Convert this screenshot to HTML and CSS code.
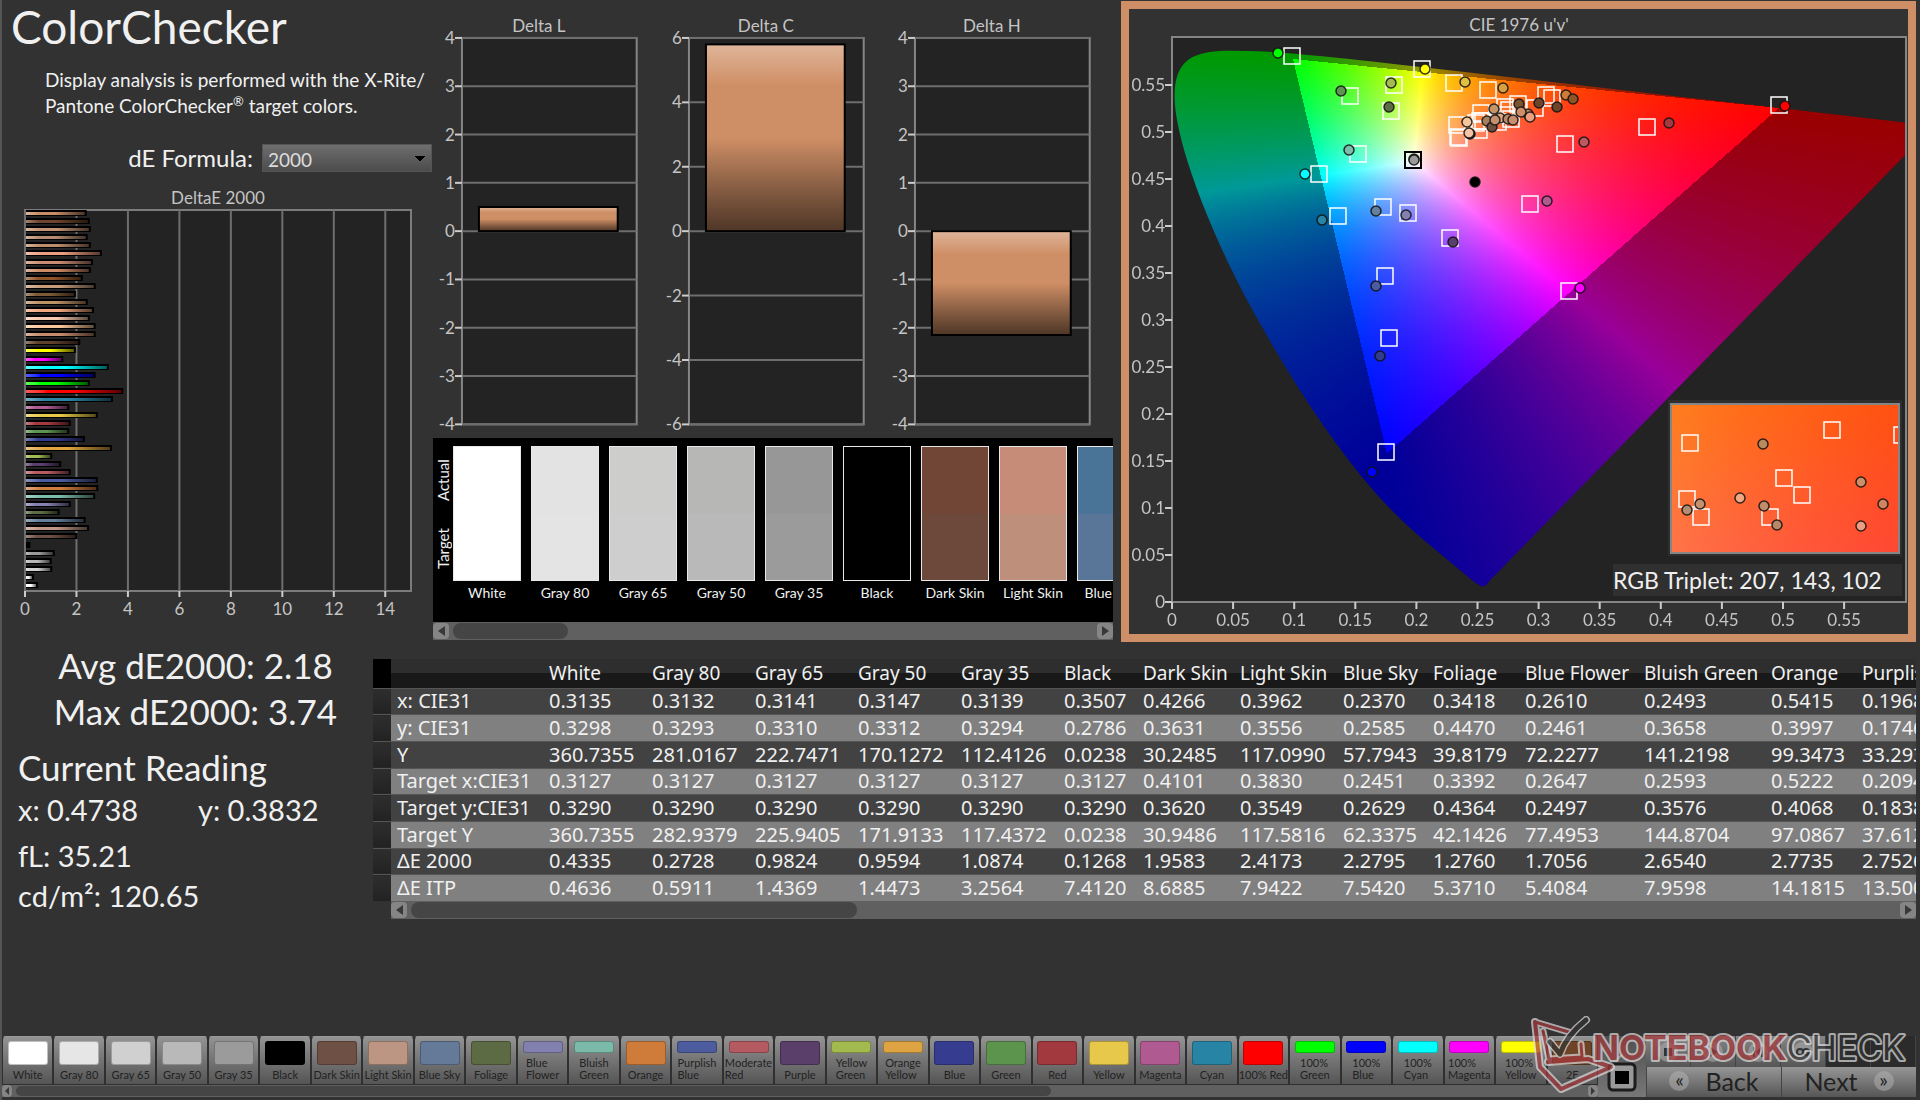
FILE: index.html
```html
<!DOCTYPE html>
<html lang="en">
<head>
    <meta charset="UTF-8">
    <meta name="viewport" content="width=device-width, initial-scale=1.0">
    <title>ColorChecker</title>
    <link rel="stylesheet" href="styles.css">
</head>
<body>
    <main>
        <section class="top">
            <div class="summary">
                <h1>ColorChecker</h1>
                <p class="intro">Display analysis is performed with the X-Rite/<br>Pantone ColorChecker<sup>®</sup> target colors.</p>
                <div class="formula">
                    <label for="formula">dE Formula:</label>
                    <select id="formula">
                        <option>2000</option>
                        <option>1994</option>
                        <option>ITP</option>
                    </select>
                </div>
                <svg id="de-chart" class="chart" viewBox="0 0 431 445"></svg>
            </div>

            <div class="deltas">
                <div class="delta-row">
                    <svg id="delta-l" class="chart" viewBox="0 0 227 438"></svg>
                    <svg id="delta-c" class="chart" viewBox="0 0 227 438"></svg>
                    <svg id="delta-h" class="chart" viewBox="0 0 227 438"></svg>
                </div>
                <div class="compare">
                    <div class="compare-view">
                        <div class="side"><span>Actual</span><span>Target</span></div>
                        <div class="patches" id="patches"></div>
                    </div>
                    <div class="scroll">
                        <button class="arrow left" aria-label="Scroll left"></button>
                        <div class="track"><div class="thumb thumb-patches"></div></div>
                        <button class="arrow right" aria-label="Scroll right"></button>
                    </div>
                </div>
            </div>

            <div class="cie">
                <svg id="cie-chart" class="chart" viewBox="0 0 779 625">
                    <foreignObject x="43" y="28" width="734" height="565">
                        <canvas id="gamut" width="734" height="565"></canvas>
                    </foreignObject>
                    <g id="cie-points"></g>
                </svg>
            </div>
        </section>

        <section class="middle">
            <div class="readings">
                <div class="average">
                    <p>Avg dE2000: 2.18</p>
                    <p>Max dE2000: 3.74</p>
                </div>
                <h2>Current Reading</h2>
                <div class="xy"><span>x: 0.4738</span><span>y: 0.3832</span></div>
                <p class="lum">fL: 35.21</p>
                <p class="lum">cd/m²: 120.65</p>
            </div>
            <div class="data">
                <div class="table-view">
                    <table id="data-table"></table>
                </div>
                <div class="scroll scroll-table">
                    <button class="arrow left" aria-label="Scroll left"></button>
                    <div class="track"><div class="thumb thumb-table"></div></div>
                    <button class="arrow right" aria-label="Scroll right"></button>
                </div>
            </div>
        </section>
    </main>

    <footer>
        <div class="strip">
            <div class="tiles" id="tiles"></div>
            <div class="scroll scroll-small">
                <button class="arrow left" aria-label="Scroll left"></button>
                <div class="track"><div class="thumb thumb-tiles"></div></div>
                <button class="arrow right" aria-label="Scroll right"></button>
            </div>
        </div>
        <button class="stop" aria-label="Stop">
            <svg viewBox="0 0 30 38"><path d="M9 6l6-5 6 5" fill="none" stroke="#999" stroke-width="2"/><rect x="2" y="10" width="26" height="26" rx="4" fill="#999" stroke="#1c1c1c" stroke-width="3"/><rect x="8" y="17" width="14" height="13" fill="#000"/></svg>
        </button>
        <div class="controls">
            <div class="transport">
                <button aria-label="Stop reading"><svg viewBox="0 0 20 20"><rect x="6" y="6" width="8" height="8"/></svg></button>
                <button aria-label="Play"><svg viewBox="0 0 20 20"><path d="M7 5l8 5-8 5z"/></svg></button>
                <button aria-label="Single step"><svg viewBox="0 0 20 20"><path d="M5 5h2v10H5zM13 5h2v10h-2zM8 10l4-4v8z"/></svg></button>
                <button aria-label="Continuous"><svg viewBox="0 0 20 20"><path d="M4 10a3 3 0 0 1 6 0 3 3 0 0 0 6 0 3 3 0 0 0-6 0 3 3 0 0 1-6 0z" fill="none" stroke="#333" stroke-width="2"/></svg></button>
                <button class="off" aria-label="Previous" disabled></button>
                <button class="off" aria-label="Following" disabled></button>
            </div>
            <div class="nav">
                <button><i>«</i>Back</button>
                <button>Next<i>»</i></button>
            </div>
        </div>
        <svg class="watermark" viewBox="0 0 390 80">
            <g fill="none" stroke-linejoin="round" stroke-linecap="round">
                <path d="M9 8 L14 53 L35 75 L85 53 L62 45 L22 48" stroke="#ddd" stroke-width="8"/>
                <path d="M9 8 L46 19 M17 17 L23 45 L56 43 L55 30" stroke="#ddd" stroke-width="7"/>
                <path d="M9 8 L14 53 L35 75 L85 53 L62 45 L22 48" stroke="#a8383c" stroke-width="4"/>
                <path d="M9 8 L46 19 M17 17 L23 45 L56 43 L55 30" stroke="#a8383c" stroke-width="3"/>
                <path d="M24 28 L34 40 Q40 22 60 6" stroke="#ddd" stroke-width="8"/>
                <path d="M24 28 L34 40 Q40 22 60 6" stroke="#333" stroke-width="5"/>
            </g>
            <text x="67" y="46"><tspan class="wm-red">NOTEBOOK</tspan><tspan class="wm-dark">CHECK</tspan></text>
        </svg>
    </footer>

    <script src="script.js"></script>
</body>
</html>
```
FILE: styles.css
```css
:root {
    --bg: #323232;
    --text: #f0f0f0;
    --muted: #c4c4c4;
    --accent: #cf8f66;
}

* {
    margin: 0;
    padding: 0;
    box-sizing: border-box;
}

body {
    background: var(--bg);
    color: var(--text);
    font-family: Lato, 'Open Sans', sans-serif;
    min-height: 100vh;
    display: flex;
    flex-direction: column;
    overflow-x: hidden;
    border-left: 2px solid #555;
}

button {
    font-family: inherit;
    border: none;
    cursor: pointer;
}

.chart {
    display: block;
    width: 100%;
    font-size: 17px;
}

.chart text {
    fill: var(--muted);
}

/* Top row */
.top {
    display: grid;
    grid-template-columns: minmax(0, 431fr) minmax(0, 688fr) minmax(0, 799fr);
    align-items: start;
}

h1 {
    font-size: 46px;
    font-weight: 400;
    line-height: 54px;
    padding-left: 9px;
}

.intro {
    font-size: 19px;
    line-height: 26px;
    padding: 13px 0 0 43px;
    white-space: nowrap;
}

.intro sup {
    font-size: 13px;
    line-height: 0;
}

.formula {
    display: flex;
    justify-content: flex-end;
    align-items: center;
    gap: 9px;
    margin: 25px 1px 13px 0;
    font-size: 24px;
    line-height: 28px;
}

.formula select {
    appearance: none;
    width: 170px;
    height: 28px;
    padding: 3px 5px 0;
    border: 1px solid #555;
    color: #ddd;
    font-family: inherit;
    font-size: 19px;
    background:
        linear-gradient(to bottom left, #000 50%, transparent 50%) calc(100% - 11px) 11px / 5px 6px no-repeat,
        linear-gradient(to bottom right, #000 50%, transparent 50%) calc(100% - 6px) 11px / 5px 6px no-repeat,
        linear-gradient(#6e6e6e, #4c4c4c);
}

.delta-row {
    display: grid;
    grid-template-columns: repeat(3, 1fr);
    margin-right: 8px;
    padding-top: 1px;
}

/* Actual / target patches */
.compare {
    margin-right: 8px;
    background: #000;
}

.compare-view {
    display: flex;
    height: 184px;
    padding-top: 8px;
    overflow: hidden;
}

.side {
    flex: none;
    width: 20px;
    height: 136px;
    display: flex;
    flex-direction: row-reverse;
    justify-content: space-around;
    writing-mode: vertical-rl;
    transform: rotate(180deg);
    font-size: 15px;
    line-height: 20px;
}

.patches {
    display: flex;
    gap: 10px;
    overflow: hidden;
}

.patch {
    flex: none;
    width: 68px;
    font-size: 14px;
    line-height: 24px;
    text-align: center;
    white-space: nowrap;
}

.patch-color {
    height: 135px;
    border: 1px solid #e8e8e8;
    display: flex;
    flex-direction: column;
}

.patch-color div {
    flex: 1;
}

/* Scroll bars */
.scroll {
    display: flex;
    align-items: center;
    height: 18px;
    background: #606060;
}

.arrow {
    flex: none;
    width: 16px;
    height: 16px;
    border-radius: 4px;
    background: #858585;
    display: flex;
    align-items: center;
    justify-content: center;
}

.arrow::before {
    content: '';
    border: 5px solid transparent;
}

.arrow.left::before {
    border-right: 7px solid #383838;
    border-left: 0;
}

.arrow.right::before {
    border-left: 7px solid #383838;
    border-right: 0;
}

.track {
    flex: 1;
    margin: 0 4px;
}

.thumb {
    height: 16px;
    border-radius: 8px;
    background: #454545;
}

.thumb-patches {
    width: 18%;
}

.thumb-table {
    width: 30%;
}

.thumb-tiles {
    width: 66%;
}

/* CIE panel */
.cie {
    margin: 1px 4px 0 0;
    border: 8px solid var(--accent);
}

.cie canvas {
    display: block;
}

.cie .triplet {
    font-size: 23px;
    fill: var(--text);
}

/* Readings and table */
.middle {
    display: flex;
}

.readings {
    flex: none;
    width: 371px;
    padding-left: 16px;
    font-size: 29px;
    line-height: 40px;
}

.average {
    font-size: 35px;
    line-height: 46px;
    text-align: center;
    padding-bottom: 10px;
}

.readings h2 {
    font-size: 35px;
    font-weight: 400;
    line-height: 46px;
}

.xy {
    display: grid;
    grid-template-columns: 180px 1fr;
    margin-bottom: 6px;
}

.data {
    flex: 1;
    min-width: 0;
    padding: 17px 4px 0 0;
}

.table-view {
    overflow: hidden;
}

table {
    table-layout: fixed;
    width: 1620px;
    height: 242px;
    border-collapse: collapse;
    font-family: 'Noto Sans', 'Open Sans', sans-serif;
    font-size: 20px;
    line-height: 24px;
}

th,
td {
    font-weight: 400;
    text-align: left;
    padding-left: 6px;
    white-space: nowrap;
}

thead th {
    height: 29px;
    font-size: 19px;
    background: linear-gradient(#2e2e2e 50%, #191919 50%);
}

thead th.gutter {
    background: #000;
}

tbody tr {
    background: #424242;
    border-top: 1px solid #555;
}

tbody tr:nth-child(even) {
    background: #808080;
}

tbody td.gutter {
    background: linear-gradient(#2e2e2e, #222);
}

.scroll-table {
    margin-left: 18px;
}

/* Bottom bar */
footer {
    position: relative;
    display: flex;
    align-items: flex-end;
    margin-top: auto;
    padding: 0 4px 3px 0;
}

.strip {
    flex: 1;
    min-width: 0;
}

.tiles {
    display: grid;
    grid-template-columns: repeat(31, 1fr);
}

.tile {
    height: 49px;
    border: 1px solid #303030;
    border-top-color: #999;
    border-radius: 4px 4px 0 0;
    background: linear-gradient(#939393, #555);
    color: #222;
    font-size: 11px;
    line-height: 12px;
    display: flex;
    flex-direction: column;
    align-items: center;
    justify-content: space-between;
    padding: 4px 0 3px;
    min-width: 0;
    overflow: hidden;
}

.tile .chip {
    width: 40px;
    flex: 1;
    margin-bottom: 4px;
    border: 1px solid rgba(0, 0, 0, 0.25);
    border-radius: 3px;
}

.tile .name {
    white-space: pre;
    text-align: left;
}

.scroll-small {
    height: 12px;
}

.scroll-small .arrow {
    width: 10px;
    height: 12px;
}

.scroll-small .arrow::before {
    border-width: 4px;
}

.scroll-small .thumb {
    height: 10px;
}

.stop {
    width: 48px;
    height: 61px;
    padding: 12px 9px 0;
    background: linear-gradient(#505050, #777);
}

.stop svg {
    display: block;
    width: 30px;
}

.controls {
    width: 270px;
}

.transport {
    display: grid;
    grid-template-columns: repeat(6, 1fr);
}

.transport button {
    display: flex;
    align-items: center;
    justify-content: center;
    height: 31px;
    background: linear-gradient(#858585, #565656);
    border-right: 1px solid #444;
}

.transport svg {
    width: 20px;
    border-radius: 50%;
    background: rgba(180, 180, 180, 0.5);
    fill: #333;
}

.transport .off {
    background: #2b2b2b;
}

.nav {
    display: grid;
    grid-template-columns: 1fr 1fr;
}

.nav button {
    height: 30px;
    display: flex;
    align-items: center;
    justify-content: center;
    gap: 16px;
    padding-bottom: 3px;
    font-size: 25px;
    color: #222;
    background: linear-gradient(#969696, #565656);
    border-left: 1px solid #444;
}

.nav i {
    width: 20px;
    height: 20px;
    border-radius: 50%;
    background: rgba(180, 180, 180, 0.5);
    font-style: normal;
    font-size: 20px;
    line-height: 17px;
}

.watermark {
    position: absolute;
    right: 4px;
    bottom: 6px;
    width: 390px;
    opacity: 0.7;
    pointer-events: none;
}

.watermark text {
    font-family: Inter, sans-serif;
    font-size: 34px;
    paint-order: stroke;
    stroke: #ddd;
    stroke-width: 4px;
    stroke-linejoin: round;
}

.wm-red {
    fill: #a8383c;
    font-weight: 700;
}

.wm-dark {
    fill: #333;
}
```
FILE: script.js
```js
const SVG = 'http://www.w3.org/2000/svg';

function add(parent, tag, attrs, text) {
    const el = document.createElementNS(SVG, tag);
    for (const key in attrs) el.setAttribute(key, attrs[key]);
    if (text !== undefined) el.textContent = text;
    parent.appendChild(el);
    return el;
}

function barGradient(svg, id, color, vertical) {
    const g = add(svg, 'linearGradient', { id: id, x1: 0, y1: 0, x2: vertical ? 0 : 1, y2: vertical ? 1 : 0 });
    add(g, 'stop', { offset: 0, 'stop-color': `color-mix(in srgb, ${color} 66%, white)` });
    add(g, 'stop', { offset: 0.22, 'stop-color': color });
    add(g, 'stop', { offset: 0.5, 'stop-color': color });
    add(g, 'stop', { offset: 1, 'stop-color': `color-mix(in srgb, ${color} 38%, black)` });
}

/* DeltaE 2000 bars */
const deBars = [
    [2.32, '#c68e66'], [2.44, '#6b4429'], [2.48, '#c49274'], [2.36, '#b58c70'], [2.48, '#bd8d6c'],
    [2.91, '#ee9e80'], [2.56, '#c98c72'], [2.48, '#cd8b66'], [2.17, '#8f5428'], [2.67, '#c79c7a'],
    [1.9, '#7d5a34'], [2.36, '#bd9264'], [2.6, '#f0a880'], [2.44, '#f6caae'], [2.67, '#fcc89c'],
    [2.67, '#c48c6c'], [2.07, '#60402a'], [1.9, '#ffff00'], [1.41, '#ff00ff'], [3.18, '#00ffff'],
    [2.67, '#0000ff'], [2.44, '#00ff00'], [3.74, '#ff0000'], [3.34, '#2a84a4'], [1.64, '#b05a92'],
    [2.75, '#e8c848'], [1.7, '#a43a40'], [1.64, '#5c9450'], [2.25, '#343c90'], [3.3, '#dea440'],
    [0.98, '#a2bc50'], [1.33, '#5a3e6c'], [1.7, '#b85a60'], [2.75, '#4c5ca0'], [2.77, '#d07c3c'],
    [2.65, '#7cbcaa'], [1.7, '#8480b0'], [1.27, '#5c6c44'], [2.28, '#64809c'], [2.41, '#c09684'],
    [1.96, '#6e5044'], [0.13, '#000000'], [1.08, '#999999'], [0.96, '#b8b8b8'], [0.98, '#d0d0d0'],
    [0.27, '#eeeeee'], [0.43, '#ffffff']
];

function drawDeChart() {
    const svg = document.getElementById('de-chart');
    const left = 23, top = 25, width = 386, height = 381, unit = width / 15;
    add(svg, 'text', { x: 216, y: 19, 'text-anchor': 'middle' }, 'DeltaE 2000');
    add(svg, 'rect', { x: left, y: top, width: width, height: height, fill: '#232323', stroke: '#7c7c7c', 'stroke-width': 2 });
    for (let v = 0; v <= 14; v += 2) {
        const x = left + v * unit;
        add(svg, 'path', { d: `M${x} ${top}v${height}`, stroke: '#6e6e6e', 'stroke-width': 2 });
        add(svg, 'path', { d: `M${x} ${top + height}v6`, stroke: '#ccc', 'stroke-width': 2 });
        add(svg, 'text', { x: x, y: top + height + 24, 'text-anchor': 'middle' }, v);
    }
    deBars.forEach((bar, i) => {
        barGradient(svg, 'de' + i, bar[1], false);
        const y = Math.round(top + i * (height - 9) / 46);
        add(svg, 'rect', { x: left + 1, y: y, width: bar[0] * unit + 1, height: 6, fill: '#000' });
        add(svg, 'rect', { x: left + 1, y: y + 2, width: Math.max(0, bar[0] * unit - 1), height: 3, fill: `url(#de${i})` });
    });
}

/* Delta L / C / H */
function drawDelta(id, title, max, step, value) {
    const svg = document.getElementById(id);
    const left = 29, top = 37, width = 175, height = 387;
    const toY = v => top + (max - v) * height / (2 * max);
    barGradient(svg, id + '-fill', '#cf8f66', true);
    add(svg, 'text', { x: 106, y: 31, 'text-anchor': 'middle' }, title);
    add(svg, 'rect', { x: left, y: top, width: width, height: height, fill: '#232323', stroke: '#858585', 'stroke-width': 2 });
    for (let v = -max; v <= max; v += step) {
        add(svg, 'path', { d: `M${left} ${toY(v)}h${width}`, stroke: '#6e6e6e', 'stroke-width': 2 });
        add(svg, 'path', { d: `M${left - 7} ${toY(v)}h7`, stroke: '#ccc', 'stroke-width': 2 });
        add(svg, 'text', { x: left - 7, y: toY(v) + 6, 'text-anchor': 'end' }, v);
    }
    const y = Math.min(toY(0), toY(value));
    add(svg, 'rect', { x: 46, y: y, width: 139, height: Math.abs(toY(0) - toY(value)), fill: `url(#${id}-fill)`, stroke: '#000', 'stroke-width': 2 });
}

/* Actual / target patches: name, actual, target */
const patches = [
    ['White', '#ffffff', '#ffffff'], ['Gray 80', '#e3e3e3', '#e4e4e4'], ['Gray 65', '#cdcdcb', '#cecece'],
    ['Gray 50', '#b7b7b5', '#b9b9b9'], ['Gray 35', '#979797', '#9b9b9b'], ['Black', '#000000', '#000000'],
    ['Dark Skin', '#714636', '#6c493b'], ['Light Skin', '#c68c78', '#be907c'], ['Blue Sky', '#4a7398', '#597699']
];

function drawPatches() {
    document.getElementById('patches').innerHTML = patches.map(p =>
        `<div class="patch"><div class="patch-color"><div style="background:${p[1]}"></div><div style="background:${p[2]}"></div></div>${p[0]}</div>`
    ).join('');
}

/* CIE 1976 chart */
const locus = [
    [.1741, .0050], [.1714, .0051], [.1689, .0069], [.1644, .0109], [.1566, .0177], [.1510, .0227], [.1440, .0297],
    [.1355, .0399], [.1241, .0578], [.1096, .0868], [.0913, .1327], [.0687, .2007], [.0454, .2950], [.0235, .4127],
    [.0082, .5384], [.0039, .6548], [.0139, .7502], [.0389, .8120], [.0743, .8338], [.1142, .8262], [.1547, .8059],
    [.2296, .7543], [.3016, .6923], [.3731, .6245], [.4441, .5547], [.5125, .4866], [.5752, .4242], [.6270, .3725],
    [.6658, .3340], [.6915, .3083], [.7190, .2809], [.7347, .2653]
];
const U_PX = 1222, V_PX = 940, PLOT_W = 734, PLOT_H = 565;

function gamutColor(u, v) {
    const X = 9 * u / (4 * v), Y = 1, Z = (12 - 3 * u - 20 * v) / (4 * v);
    const rgb = [
        2.4935 * X - 0.9314 * Y - 0.4027 * Z,
        -0.8295 * X + 1.7627 * Y + 0.0236 * Z,
        0.0358 * X - 0.0762 * Y + 0.9569 * Z
    ];
    const max = Math.max(...rgb);
    const inside = Math.min(...rgb) >= 0;
    return rgb.map(c => Math.max(c, 0) / max * 255 * (inside ? 1 : 0.6));
}

function paint(canvas, u0, u1, v0, v1) {
    const ctx = canvas.getContext('2d');
    const w = canvas.width, h = canvas.height;
    const img = ctx.createImageData(w, h);
    for (let y = 0; y < h; y++) {
        for (let x = 0; x < w; x++) {
            const c = gamutColor(u0 + (u1 - u0) * x / w, v1 - (v1 - v0) * (y + 0.5) / h);
            img.data.set([c[0], c[1], c[2], 255], (y * w + x) * 4);
        }
    }
    ctx.putImageData(img, 0, 0);
    return ctx;
}

function drawGamut() {
    const ctx = paint(document.getElementById('gamut'), 0, PLOT_W / U_PX, 0, PLOT_H / V_PX);
    const pts = locus.map(([x, y]) => {
        const d = -2 * x + 12 * y + 3;
        return [4 * x / d * U_PX, PLOT_H - 9 * y / d * V_PX];
    });
    ctx.globalCompositeOperation = 'destination-in';
    ctx.beginPath();
    ctx.moveTo(pts[0][0] + 4, pts[0][1] - 6);
    for (let i = 0; i < pts.length - 1; i++) {
        ctx.quadraticCurveTo(pts[i][0], pts[i][1], (pts[i][0] + pts[i + 1][0]) / 2, (pts[i][1] + pts[i + 1][1]) / 2);
    }
    ctx.lineTo(...pts[pts.length - 1]);
    ctx.closePath();
    ctx.fill();
}

const targets = [
    [120, 19], [250, 32], [222, 48], [178, 59], [219, 74], [282, 46], [316, 53], [186, 117], [147, 137], [166, 179],
    [211, 170], [236, 176], [278, 201], [213, 239], [217, 301], [214, 415], [309, 76], [285, 88], [286, 100],
    [287, 101], [304, 86], [308, 84], [311, 84], [307, 93], [333, 70], [346, 67], [363, 71], [374, 58], [380, 61],
    [339, 82], [326, 85], [337, 73], [335, 78], [393, 107], [475, 90], [607, 68], [358, 167], [397, 254]
];
const measured = [
    [106, 16, '#00ff00'], [253, 32, '#ffff00'], [219, 46, '#a2bc50'], [169, 54, '#5c9450'], [217, 70, '#5c6c44'],
    [293, 45, '#e0c040'], [331, 51, '#d9a040'], [177, 113, '#7cbcaa'], [133, 137, '#00ffff'], [150, 183, '#2a84a4'],
    [204, 174, '#64809c'], [234, 178, '#8480b0'], [281, 205, '#5a3e6c'], [204, 249, '#4c5ca0'], [208, 319, '#343c90'],
    [200, 435, '#0000ff'], [242, 122, '#777777'], [242, 123, '#999999'], [303, 145, '#000000'], [295, 85, '#f6c69c'],
    [298, 97, '#333333'], [297, 96, '#f6c4a4'], [322, 72, '#c29468'], [315, 84, '#a5805e'], [320, 90, '#6b5040'],
    [328, 81, '#e0a880'], [323, 83, '#c49070'], [336, 82, '#b98868'], [341, 83, '#c78e70'], [347, 67, '#7a5432'],
    [356, 77, '#c08060'], [349, 75, '#cf8f66'], [358, 80, '#ee9e80'], [367, 66, '#6b4429'], [394, 58, '#cf7c3a'],
    [401, 62, '#8f5428'], [385, 70, '#6b4429'], [497, 86, '#a43a40'], [412, 105, '#b85a60'], [375, 164, '#b05a92'],
    [613, 69, '#ff0000'], [408, 251, '#ff00ff']
];
const insetTargets = [[518, 406], [660, 393], [612, 441], [630, 458], [515, 462], [529, 480], [598, 480]];
const insetMeasured = [
    [591, 407, '#b98a5c'], [689, 445, '#cf8f66'], [711, 467, '#cf8560'], [689, 489, '#ee9e80'], [568, 461, '#f0a880'],
    [592, 469, '#bd8d6c'], [605, 488, '#b98868'], [528, 467, '#c49070'], [515, 473, '#b58c70']
];

function target(g, x, y, color) {
    add(g, 'rect', { x: x - 8, y: y - 8, width: 16, height: 16, fill: 'none', stroke: color, 'stroke-width': 1.5 });
}

function dot(g, x, y, color) {
    add(g, 'circle', { cx: x, cy: y, r: 5, fill: color, stroke: '#111', 'stroke-opacity': 0.85, 'stroke-width': 1.5 });
}

function drawCie() {
    const svg = document.getElementById('cie-chart');
    add(svg, 'text', { x: 390, y: 22, 'text-anchor': 'middle' }, "CIE 1976 u'v'");
    svg.insertBefore(add(svg, 'rect', { x: 43, y: 28, width: PLOT_W, height: PLOT_H, fill: '#232323' }), svg.firstChild);

    const g = document.getElementById('cie-points');
    g.setAttribute('transform', 'translate(43 28)');
    add(g, 'rect', { width: PLOT_W, height: PLOT_H, fill: 'none', stroke: '#858585', 'stroke-width': 2 });
    for (let i = 0; i <= 11; i++) {
        const label = +(i * 0.05).toFixed(2);
        const x = label * U_PX, y = PLOT_H - label * V_PX;
        add(g, 'path', { d: `M${x} ${PLOT_H}v7M0 ${y}h-7`, stroke: '#ccc', 'stroke-width': 2 });
        add(g, 'text', { x: x, y: PLOT_H + 24, 'text-anchor': 'middle' }, label);
        add(g, 'text', { x: -7, y: y + 6, 'text-anchor': 'end' }, label);
    }

    targets.forEach(p => target(g, p[0], p[1], '#fff'));
    add(g, 'rect', { x: 233, y: 115, width: 16, height: 16, fill: 'none', stroke: '#000', 'stroke-width': 2 });
    measured.forEach(p => dot(g, ...p));

    // zoomed view around the current reading
    add(g, 'rect', { x: 496, y: 363, width: 234, height: 156, fill: '#2e2e2e' });
    const fo = add(g, 'foreignObject', { x: 499, y: 367, width: 228, height: 149 });
    const canvas = document.createElement('canvas');
    canvas.width = 228;
    canvas.height = 149;
    fo.appendChild(canvas);
    paint(canvas, 0.263, 0.306, 0.503, 0.535);
    insetTargets.forEach(p => target(g, p[0], p[1], '#fff'));
    add(g, 'path', { d: 'M727 390h-5v16h5', fill: 'none', stroke: '#fff', 'stroke-width': 1.5 });
    insetMeasured.forEach(p => dot(g, ...p));
    add(g, 'rect', { x: 499, y: 367, width: 228, height: 149, fill: 'none', stroke: '#858585', 'stroke-width': 2 });

    add(g, 'rect', { x: 441, y: 527, width: 289, height: 32, fill: '#303030' });
    add(g, 'text', { x: 441, y: 552, class: 'triplet' }, 'RGB Triplet: 207, 143, 102');
}

/* Data table */
const columns = ['White', 'Gray 80', 'Gray 65', 'Gray 50', 'Gray 35', 'Black', 'Dark Skin', 'Light Skin', 'Blue Sky', 'Foliage', 'Blue Flower', 'Bluish Green', 'Orange', 'Purplish Blue'];
const widths = [18, 152, 103, 103, 103, 103, 103, 79, 97, 103, 90, 92, 119, 127, 91, 137];
const rows = [
    ['x: CIE31', '0.3135', '0.3132', '0.3141', '0.3147', '0.3139', '0.3507', '0.4266', '0.3962', '0.2370', '0.3418', '0.2610', '0.2493', '0.5415', '0.1968'],
    ['y: CIE31', '0.3298', '0.3293', '0.3310', '0.3312', '0.3294', '0.2786', '0.3631', '0.3556', '0.2585', '0.4470', '0.2461', '0.3658', '0.3997', '0.1746'],
    ['Y', '360.7355', '281.0167', '222.7471', '170.1272', '112.4126', '0.0238', '30.2485', '117.0990', '57.7943', '39.8179', '72.2277', '141.2198', '99.3473', '33.2935'],
    ['Target x:CIE31', '0.3127', '0.3127', '0.3127', '0.3127', '0.3127', '0.3127', '0.4101', '0.3830', '0.2451', '0.3392', '0.2647', '0.2593', '0.5222', '0.2094'],
    ['Target y:CIE31', '0.3290', '0.3290', '0.3290', '0.3290', '0.3290', '0.3290', '0.3620', '0.3549', '0.2629', '0.4364', '0.2497', '0.3576', '0.4068', '0.1838'],
    ['Target Y', '360.7355', '282.9379', '225.9405', '171.9133', '117.4372', '0.0238', '30.9486', '117.5816', '62.3375', '42.1426', '77.4953', '144.8704', '97.0867', '37.6126'],
    ['ΔE 2000', '0.4335', '0.2728', '0.9824', '0.9594', '1.0874', '0.1268', '1.9583', '2.4173', '2.2795', '1.2760', '1.7056', '2.6540', '2.7735', '2.7526'],
    ['ΔE ITP', '0.4636', '0.5911', '1.4369', '1.4473', '3.2564', '7.4120', '8.6885', '7.9422', '7.5420', '5.3710', '5.4084', '7.9598', '14.1815', '13.5009']
];

function drawTable() {
    const cols = widths.map(w => `<col style="width:${w}px">`).join('');
    const head = columns.map(c => `<th scope="col">${c}</th>`).join('');
    const body = rows.map(r =>
        `<tr><td class="gutter"></td><th scope="row">${r[0]}</th>${r.slice(1).map(c => `<td>${c}</td>`).join('')}</tr>`
    ).join('');
    document.getElementById('data-table').innerHTML =
        `<colgroup>${cols}</colgroup><thead><tr><th class="gutter"></th><th></th>${head}</tr></thead><tbody>${body}</tbody>`;
}

/* Tiles along the bottom */
const tiles = [
    ['White', '#ffffff'], ['Gray 80', '#e6e6e6'], ['Gray 65', '#d0d0d0'], ['Gray 50', '#b9b9b9'], ['Gray 35', '#9b9b9b'],
    ['Black', '#000000'], ['Dark Skin', '#6e5144'], ['Light Skin', '#bc9682'], ['Blue Sky', '#657a99'], ['Foliage', '#5c6b44'],
    ['Blue\nFlower', '#8280ae'], ['Bluish\nGreen', '#7bbaa8'], ['Orange', '#cf7c3a'], ['Purplish\nBlue', '#4d5c9e'],
    ['Moderate\nRed', '#b65a62'], ['Purple', '#593f6a'], ['Yellow\nGreen', '#a3bb4e'], ['Orange\nYellow', '#dea443'],
    ['Blue', '#363c90'], ['Green', '#5c944e'], ['Red', '#a2393f'], ['Yellow', '#e8c84a'], ['Magenta', '#b05a92'],
    ['Cyan', '#2884a4'], ['100% Red', '#ff0000'], ['100%\nGreen', '#00ff00'], ['100%\nBlue', '#0000ff'],
    ['100%\nCyan', '#00ffff'], ['100%\nMagenta', '#ff00ff'], ['100%\nYellow', '#ffff00'], ['2E', '#6e4428']
];

function drawTiles() {
    document.getElementById('tiles').innerHTML = tiles.map(t =>
        `<button class="tile"><span class="chip" style="background:${t[1]}"></span><span class="name">${t[0]}</span></button>`
    ).join('');
}

drawDeChart();
drawDelta('delta-l', 'Delta L', 4, 1, 0.5);
drawDelta('delta-c', 'Delta C', 6, 2, 5.8);
drawDelta('delta-h', 'Delta H', 4, 1, -2.15);
drawPatches();
drawGamut();
drawCie();
drawTable();
drawTiles();
```
